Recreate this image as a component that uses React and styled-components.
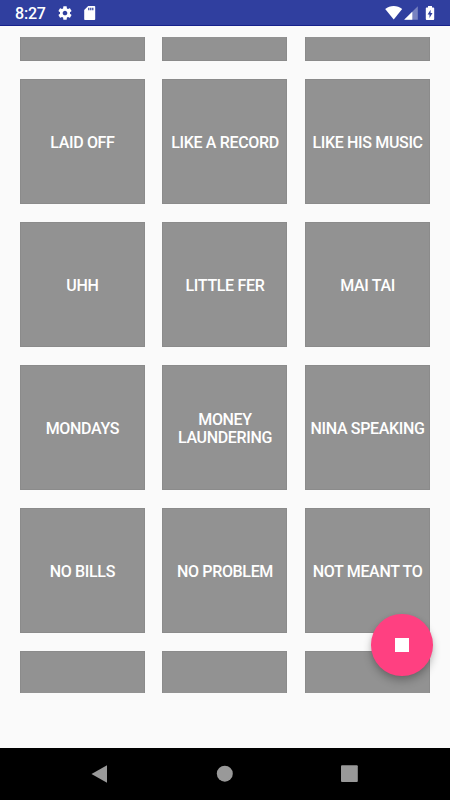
import styled, { createGlobalStyle } from "styled-components";

const sounds = [
  "",
  "",
  "",
  "LAID OFF",
  "LIKE A RECORD",
  "LIKE HIS MUSIC",
  "UHH",
  "LITTLE FER",
  "MAI TAI",
  "MONDAYS",
  "MONEY LAUNDERING",
  "NINA SPEAKING",
  "NO BILLS",
  "NO PROBLEM",
  "NOT MEANT TO",
  "",
  "",
  "",
];

export default function App() {
  return (
    <Screen>
      <GlobalStyle />
      <StatusBar>
        <Time>8:27</Time>
        <StatusIcon $left={11.5} width='16' height='16' viewBox='0 0 24 24'>
          <path d='M19.43 12.98c.04-.32.07-.64.07-.98s-.03-.66-.07-.98l2.11-1.65c.19-.15.24-.42.12-.64l-2-3.46c-.12-.22-.39-.3-.61-.22l-2.49 1c-.52-.4-1.08-.73-1.69-.98l-.38-2.65C14.46 2.18 14.25 2 14 2h-4c-.25 0-.46.18-.49.42l-.38 2.65c-.61.25-1.17.59-1.69.98l-2.49-1c-.23-.09-.49 0-.61.22l-2 3.46c-.13.22-.07.49.12.64l2.11 1.65c-.04.32-.07.65-.07.98s.03.66.07.98l-2.11 1.65c-.19.15-.24.42-.12.64l2 3.46c.12.22.39.3.61.22l2.49-1c.52.4 1.08.73 1.69.98l.38 2.65c.03.24.24.42.49.42h4c.25 0 .46-.18.49-.42l.38-2.65c.61-.25 1.17-.59 1.69-.98l2.49 1c.23.09.49 0 .61-.22l2-3.46c.12-.22.07-.49-.12-.64l-2.11-1.65zM12 15.5c-1.93 0-3.5-1.57-3.5-3.5s1.57-3.5 3.5-3.5 3.5 1.57 3.5 3.5-1.57 3.5-3.5 3.5z' />
        </StatusIcon>
        <StatusIcon $left={10.5} width='12' height='14' viewBox='0 0 12 14'>
          <path d='M4.2 0H10.4Q11.2 0 11.2.8V13.2Q11.2 14 10.4 14H1Q.2 14 .2 13.2V4z' />
          <path d='M4.2 1.8h1.2v2.5H4.2zM6.2 1.8h1.2v2.5H6.2zM8.2 1.8h1.2v2.5H8.2z' fill='#303f9f' />
        </StatusIcon>
        <Spacer />
        <StatusIcon width='18' height='14' viewBox='0 0 18 14'>
          <path d='M8.7 13.6L.2 3.1C2.6 1.2 5.600.1 8.700.1s6.100 1.100 8.500 3z' />
        </StatusIcon>
        <StatusIcon $left={1.5} width='14' height='14' viewBox='0 0 14 14'>
          <path d='M13.800.2V13.800H.2z' opacity='.35' />
          <path d='M8.300 5.700V13.800H.2z' />
        </StatusIcon>
        <StatusIcon $left={7} width='10' height='14' viewBox='0 0 10 14'>
          <path d='M3 0h4v1.400h1.300q.9 0 .9.9v10.800q0 .9-.9.9H1.700q-.9 0-.9-.9V2.300q0-.9.900-.9H3z' />
          <path d='M5.600 3.700L2.600 8.500h1.900v3.400l3-4.900H5.600z' fill='#303f9f' />
        </StatusIcon>
      </StatusBar>

      <SoundList>
        <Grid>
          {sounds.map((sound, i) => (
            <Tile key={i}>{sound}</Tile>
          ))}
        </Grid>
      </SoundList>

      <StopButton aria-label='Stop'>
        <StopSquare />
      </StopButton>

      <NavBar>
        <svg width='18' height='20' viewBox='0 0 18 20'>
          <path d='M16 1.300V18.700L.5 10z' />
        </svg>
        <svg width='18' height='20' viewBox='0 0 18 20'>
          <circle cx='8.800' cy='9.700' r='8' />
        </svg>
        <svg width='18' height='20' viewBox='0 0 18 20'>
          <rect x='0' y='1.300' width='16.800' height='16.800' rx='1' />
        </svg>
      </NavBar>
    </Screen>
  );
}

const GlobalStyle = createGlobalStyle`
  body {
    margin: 0;
    font-family: Roboto, sans-serif;
  }
`;

const Screen = styled.div`
  position: relative;
  display: flex;
  flex-direction: column;
  width: 450px;
  height: 800px;
  overflow: hidden;
  background: #fafafa;
`;

const StatusBar = styled.header`
  display: flex;
  align-items: center;
  flex: none;
  height: 26px;
  box-sizing: border-box;
  padding: 0 15px;
  border-bottom: 1px solid #17228c;
  background: #303f9f;
  color: #fff;
`;

const Time = styled.span`
  padding-top: 2px;
  font-size: 16px;
  font-weight: 500;
  letter-spacing: -0.2px;
  line-height: 22px;
`;

const StatusIcon = styled.svg`
  flex: none;
  margin-left: ${({ $left }) => $left || 0}px;
  margin-top: 1px;
  fill: #fff;
`;

const Spacer = styled.div`
  flex: 1;
`;

const SoundList = styled.main`
  flex: none;
  height: 656px;
  margin-top: 11px;
  overflow: hidden;
`;

const Grid = styled.div`
  display: grid;
  grid-template-columns: repeat(3, 125px);
  grid-auto-rows: 125px;
  gap: 18px 17.6px;
  margin: -101px 0 0 19.9px;
`;

const Tile = styled.div`
  display: flex;
  align-items: center;
  justify-content: center;
  box-sizing: border-box;
  padding: 2px 4px 0;
  border: 1px solid #8b8b8b;
  background: #929292;
  color: #fff;
  font-size: 16px;
  font-weight: 500;
  letter-spacing: -0.33px;
  line-height: 18px;
  text-align: center;
`;

const StopButton = styled.button`
  position: absolute;
  left: 371px;
  top: 614px;
  display: flex;
  align-items: center;
  justify-content: center;
  width: 61.5px;
  height: 61.5px;
  padding: 0;
  border: none;
  border-radius: 50%;
  background: #ff4081;
  box-shadow: 0 5px 9px rgba(0, 0, 0, 0.24), 0 1px 4px rgba(0, 0, 0, 0.08);
`;

const StopSquare = styled.span`
  width: 14px;
  height: 14px;
  background: #fff;
`;

const NavBar = styled.nav`
  display: flex;
  align-items: center;
  justify-content: space-between;
  flex: 0 0 52px;
  box-sizing: border-box;
  margin-top: auto;
  padding: 0 91.5px 0 90.5px;
  background: #000;

  svg {
    fill: #999;
  }
`;
